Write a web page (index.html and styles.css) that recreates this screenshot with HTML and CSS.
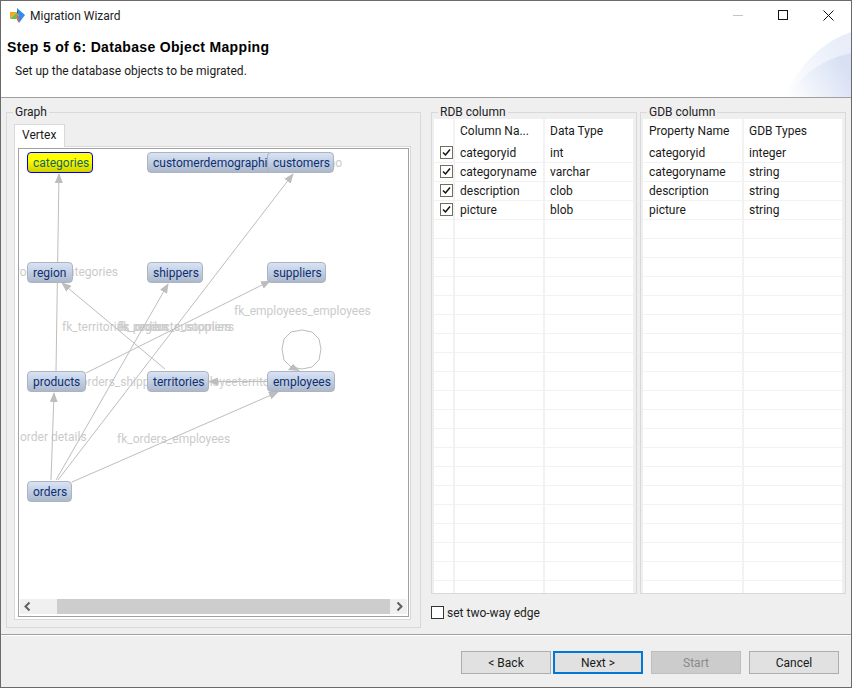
FILE: index.html
```html
<!DOCTYPE html>
<html lang="en">
<head>
  <meta charset="UTF-8" />
  <title>Migration Wizard</title>
  <link rel="stylesheet" href="styles.css">
</head>
<body>
<div class="window">

  <div class="titlebar">
    <svg class="logo" width="16" height="16" viewBox="0 0 16 16">
      <polygon points="8,0 16,7 10,15 10,8" fill="#2f8fe8"/>
      <polygon points="8,0 10,8 8,5" fill="#24408c"/>
      <polygon points="1,4 8,4 1,11" fill="#f5a623"/>
      <polygon points="1,11 8,4 9,11 4,11" fill="#6cc04a"/>
      <polygon points="8,6 10,8 10,15 8,12" fill="#ea5a6a"/>
    </svg>
    <span class="title">Migration Wizard</span>
    <div class="controls">
      <span class="ctl"><svg width="11" height="11" viewBox="0 0 11 11"><path d="M0 5.5H10" stroke="#c4c4c4"/></svg></span>
      <span class="ctl"><svg width="11" height="11" viewBox="0 0 11 11"><rect x="0.5" y="0.5" width="9" height="9" fill="none" stroke="#111"/></svg></span>
      <span class="ctl"><svg width="11" height="11" viewBox="0 0 11 11"><path d="M0.5 0.5L10.5 10.5M10.5 0.5L0.5 10.5" stroke="#111"/></svg></span>
    </div>
  </div>

  <div class="banner">
    <h1>Step 5 of 6: Database Object Mapping</h1>
    <p>Set up the database objects to be migrated.</p>
    <svg class="swoosh" width="70" height="67" viewBox="0 0 70 67">
      <defs>
        <linearGradient id="sw1" x1="0" y1="1" x2="1" y2="0.4">
          <stop offset="0" stop-color="#fff"/>
          <stop offset="1" stop-color="#e8edf9"/>
        </linearGradient>
        <linearGradient id="sw2" x1="0" y1="1" x2="1" y2="0.6">
          <stop offset="0" stop-color="#fff"/>
          <stop offset="1" stop-color="#d8e1f4"/>
        </linearGradient>
      </defs>
      <path d="M3 67Q28 16 70 2V67Z" fill="url(#sw1)"/>
      <path d="M6 67Q28 32 70 23V67Z" fill="url(#sw2)"/>
    </svg>
  </div>

  <div class="main">
    <fieldset class="group graph-group">
      <legend>Graph</legend>
      <div class="tab">Vertex</div>
      <div class="tab-pane">
        <div class="canvas">
          <div class="graph">
            <span class="edge-label l-cust">customercustomerdemo</span>
            <span class="edge-label l-cat">fk_products_categories</span>
            <span class="edge-label l-emp">fk_employees_employees</span>
            <span class="edge-label l-terr">fk_territories_region</span>
            <span class="edge-label l-sup">fk_products_suppliers</span>
            <span class="edge-label l-ocust">fk_orders_customers</span>
            <span class="edge-label l-ship">fk_orders_shippers</span>
            <span class="edge-label l-et">employeeterritories</span>
            <span class="edge-label l-od">order details</span>
            <span class="edge-label l-oe">fk_orders_employees</span>

            <svg class="edges" width="389" height="450" viewBox="19 149 389 450">
              <defs>
                <marker id="arrow" markerWidth="10" markerHeight="8" refX="9" refY="4" orient="auto" markerUnits="userSpaceOnUse">
                  <polygon points="0,0 10,4 0,8" fill="#bdbdbd"/>
                </marker>
              </defs>
              <g class="edge-lines">
                <line x1="56" y1="371" x2="59" y2="174" marker-end="url(#arrow)"/>
                <line x1="51" y1="480" x2="54" y2="393" marker-end="url(#arrow)"/>
                <line x1="56" y1="480" x2="168" y2="284" marker-end="url(#arrow)"/>
                <line x1="58" y1="480" x2="293" y2="174" marker-end="url(#arrow)"/>
                <line x1="72" y1="482" x2="278" y2="392" marker-end="url(#arrow)"/>
                <line x1="86" y1="373" x2="270" y2="281" marker-end="url(#arrow)"/>
                <line x1="165" y1="369" x2="62" y2="283" marker-end="url(#arrow)"/>
                <line x1="267" y1="381.5" x2="209" y2="381.5" marker-end="url(#arrow)"/>
                <polyline points="302,369 312,367 319,360 321,349 319,339 312,332 302,330 291,332 284,339 282,349 284,360 291,367 302,369"/>
                <polygon class="loop-head" points="288,370 293,364 300,371"/>
              </g>
            </svg>

            <div class="node selected n-categories">categories</div>
            <div class="node n-demo">customerdemographics</div>
            <div class="node n-customers">customers</div>
            <div class="node n-region">region</div>
            <div class="node n-shippers">shippers</div>
            <div class="node n-suppliers">suppliers</div>
            <div class="node n-products">products</div>
            <div class="node n-territories">territories</div>
            <div class="node n-employees">employees</div>
            <div class="node n-orders">orders</div>
          </div>
          <div class="hscroll">
            <svg class="arrow" width="16" height="15" viewBox="0 0 16 15"><path d="M9.5 3.5L5.5 7.5L9.5 11.5" fill="none" stroke="#606060" stroke-width="2"/></svg>
            <div class="track"><div class="thumb"></div></div>
            <svg class="arrow" width="16" height="15" viewBox="0 0 16 15"><path d="M6.5 3.5L10.5 7.5L6.5 11.5" fill="none" stroke="#606060" stroke-width="2"/></svg>
          </div>
        </div>
      </div>
    </fieldset>

    <div class="right">
      <div class="columns">
        <fieldset class="group col-group">
          <legend>RDB column</legend>
          <table class="grid rdb">
            <thead><tr><th></th><th>Column Na...</th><th>Data Type</th></tr></thead>
            <tbody>
              <tr><td class="chk"><span class="check"><svg width="11" height="11" viewBox="0 0 11 11"><path d="M2 5.5L4.5 8L9 2.5" fill="none" stroke="#111" stroke-width="1.5"/></svg></span></td><td>categoryid</td><td>int</td></tr>
              <tr><td class="chk"><span class="check"><svg width="11" height="11" viewBox="0 0 11 11"><path d="M2 5.5L4.5 8L9 2.5" fill="none" stroke="#111" stroke-width="1.5"/></svg></span></td><td>categoryname</td><td>varchar</td></tr>
              <tr><td class="chk"><span class="check"><svg width="11" height="11" viewBox="0 0 11 11"><path d="M2 5.5L4.5 8L9 2.5" fill="none" stroke="#111" stroke-width="1.5"/></svg></span></td><td>description</td><td>clob</td></tr>
              <tr><td class="chk"><span class="check"><svg width="11" height="11" viewBox="0 0 11 11"><path d="M2 5.5L4.5 8L9 2.5" fill="none" stroke="#111" stroke-width="1.5"/></svg></span></td><td>picture</td><td>blob</td></tr>
              <tr><td></td><td></td><td></td></tr><tr><td></td><td></td><td></td></tr><tr><td></td><td></td><td></td></tr><tr><td></td><td></td><td></td></tr>
              <tr><td></td><td></td><td></td></tr><tr><td></td><td></td><td></td></tr><tr><td></td><td></td><td></td></tr><tr><td></td><td></td><td></td></tr>
              <tr><td></td><td></td><td></td></tr><tr><td></td><td></td><td></td></tr><tr><td></td><td></td><td></td></tr><tr><td></td><td></td><td></td></tr>
              <tr><td></td><td></td><td></td></tr><tr><td></td><td></td><td></td></tr><tr><td></td><td></td><td></td></tr><tr><td></td><td></td><td></td></tr>
              <tr><td></td><td></td><td></td></tr><tr><td></td><td></td><td></td></tr><tr><td></td><td></td><td></td></tr><tr><td></td><td></td><td></td></tr>
            </tbody>
          </table>
        </fieldset>

        <fieldset class="group col-group">
          <legend>GDB column</legend>
          <table class="grid gdb">
            <thead><tr><th>Property Name</th><th>GDB Types</th></tr></thead>
            <tbody>
              <tr><td>categoryid</td><td>integer</td></tr>
              <tr><td>categoryname</td><td>string</td></tr>
              <tr><td>description</td><td>string</td></tr>
              <tr><td>picture</td><td>string</td></tr>
              <tr><td></td><td></td></tr><tr><td></td><td></td></tr><tr><td></td><td></td></tr><tr><td></td><td></td></tr>
              <tr><td></td><td></td></tr><tr><td></td><td></td></tr><tr><td></td><td></td></tr><tr><td></td><td></td></tr>
              <tr><td></td><td></td></tr><tr><td></td><td></td></tr><tr><td></td><td></td></tr><tr><td></td><td></td></tr>
              <tr><td></td><td></td></tr><tr><td></td><td></td></tr><tr><td></td><td></td></tr><tr><td></td><td></td></tr>
              <tr><td></td><td></td></tr><tr><td></td><td></td></tr><tr><td></td><td></td></tr><tr><td></td><td></td></tr>
            </tbody>
          </table>
        </fieldset>
      </div>

      <label class="two-way"><span class="box"></span>set two-way edge</label>
    </div>
  </div>

  <div class="footer">
    <button class="btn">&lt; Back</button>
    <button class="btn default">Next &gt;</button>
    <button class="btn disabled">Start</button>
    <button class="btn">Cancel</button>
  </div>

</div>
</body>
</html>
```

FILE: styles.css
```css
* {
  box-sizing: border-box;
}

body {
  margin: 0;
  font-family: Roboto, 'Noto Sans', sans-serif;
  font-size: 12px;
  color: #1a1a1a;
  background: #efefef;
}

.window {
  width: 852px;
  height: 688px;
  border: 1px solid #6a6a6a;
  background: #efefef;
  display: flex;
  flex-direction: column;
  overflow: hidden;
}

/* title bar */
.titlebar {
  height: 29px;
  flex: none;
  background: #fff;
  display: flex;
  align-items: center;
  padding-left: 8px;
}

.logo {
  margin-right: 5px;
}

.title {
  color: #222;
}

.controls {
  margin-left: auto;
  display: flex;
}

.ctl {
  width: 45px;
  height: 29px;
  display: flex;
  align-items: center;
  justify-content: center;
}

/* header */
.banner {
  height: 68px;
  flex: none;
  background: #fff;
  border-bottom: 1px solid #a0a0a0;
  position: relative;
}

.banner h1 {
  margin: 0;
  padding: 9px 0 0 6px;
  font-family: 'Liberation Sans', sans-serif;
  font-size: 14px;
  line-height: 17px;
  font-weight: bold;
  letter-spacing: 0.33px;
  color: #000;
}

.banner p {
  margin: 7px 0 0 14px;
  line-height: 16px;
}

.swoosh {
  position: absolute;
  right: 0;
  bottom: 0;
}

/* main area */
.main {
  flex: 1;
  display: flex;
  padding: 7px 0 0 5px;
  border-bottom: 1px solid #a0a0a0;
}

.group {
  margin: 0;
  border: 1px solid #d9d9d9;
  min-width: 0;
}

.group legend {
  padding: 0 2px;
  line-height: 14px;
  color: #222;
}

.graph-group legend {
  margin-left: -1px;
}

.col-group legend {
  margin-left: 4px;
}

.graph-group {
  width: 415px;
  height: 523px;
  padding: 5px 9px 7px 7px;
}

.tab {
  width: 51px;
  height: 23px;
  padding: 2px 0 0 7px;
  line-height: 16px;
  background: #fff;
  border: 1px solid #d9d9d9;
  border-bottom: none;
  position: relative;
  z-index: 1;
}

.tab-pane {
  height: 474px;
  margin-top: -1px;
  padding: 1px 1px 2px 3px;
  background: #fff;
  border: 1px solid #d9d9d9;
}

.canvas {
  height: 100%;
  border: 1px solid #a0a0a6;
}

.graph {
  height: 450px;
  position: relative;
  overflow: hidden;
}

.edges {
  position: absolute;
  left: 0;
  top: 0;
}

.edge-lines line,
.edge-lines polyline {
  stroke: #bdbdbd;
  stroke-width: 1;
  fill: none;
}

.loop-head {
  fill: #bdbdbd;
}

.edge-label {
  position: absolute;
  color: #cbcbcb;
  white-space: nowrap;
  line-height: 16px;
}

.l-cust { right: 66px; top: 6px; }
.l-cat { right: 290px; top: 115px; }
.l-emp { left: 215px; top: 154px; }
.l-terr { left: 43px; top: 170px; }
.l-sup { left: 98px; top: 170px; }
.l-ocust { left: 100px; top: 170px; }
.l-ship { left: 46px; top: 225px; }
.l-et { left: 167px; top: 225px; }
.l-od { left: 1px; top: 280px; }
.l-oe { left: 98px; top: 282px; }

.node {
  position: absolute;
  height: 21px;
  padding-left: 5px;
  line-height: 21px;
  white-space: nowrap;
  overflow: hidden;
  color: #0d2f73;
  background: linear-gradient(#d8e4f6, #acb8cb);
  border: 1px solid #adb3bf;
  border-radius: 4px;
}

.node.selected {
  color: #12665c;
  background: linear-gradient(#ffff00 40%, #cfcf00);
  border-color: #0000f0;
}

.n-categories { left: 8px; top: 3px; width: 66px; }
.n-demo { left: 128px; top: 3px; width: 126px; }
.n-customers { left: 248px; top: 3px; width: 67px; }
.n-region { left: 8px; top: 113px; width: 46px; }
.n-shippers { left: 128px; top: 113px; width: 56px; }
.n-suppliers { left: 248px; top: 113px; width: 59px; }
.n-products { left: 8px; top: 222px; width: 59px; }
.n-territories { left: 128px; top: 222px; width: 62px; }
.n-employees { left: 248px; top: 222px; width: 68px; }
.n-orders { left: 8px; top: 332px; width: 45px; }

.hscroll {
  height: 15px;
  margin: 0 1px;
  display: flex;
  background: #f0f0f0;
}

.track {
  flex: 1;
  padding-left: 21px;
}

.thumb {
  width: 333px;
  height: 15px;
  background: #cdcdcd;
}

/* column tables */
.right {
  margin-left: 10px;
  width: 415px;
}

.columns {
  display: flex;
  gap: 3px;
}

.col-group {
  width: 206px;
  height: 489px;
  padding: 0 3px 0 2px;
  overflow: hidden;
}

.grid {
  width: 199px;
  table-layout: fixed;
  border-collapse: collapse;
  background: #fff;
}

.grid th {
  height: 24px;
  padding: 0 0 1px 5px;
  font-weight: normal;
  text-align: left;
  border-right: 2px solid #f3f3f3;
}

.grid td {
  height: 19px;
  padding: 1px 0 0 5px;
  line-height: 16px;
  border-right: 2px solid #f2f2f2;
  border-bottom: 1px solid #f2f2f2;
}

.grid th:last-child,
.grid td:last-child {
  border-right: none;
}

.rdb th:first-child { width: 20px; }
.rdb th:nth-child(2) { width: 90px; }
.gdb th:first-child { width: 100px; }

.gdb th:first-child,
.gdb td:first-child {
  padding-left: 6px;
}

.grid td.chk {
  padding: 0 0 0 6px;
}

.check {
  display: block;
  width: 13px;
  height: 13px;
  background: #fff;
  border: 1px solid #6f6f5c;
}

.check svg {
  display: block;
}

.two-way {
  display: flex;
  align-items: center;
  height: 13px;
  margin-top: 12px;
  color: #222;
}

.box {
  width: 13px;
  height: 13px;
  margin-right: 3px;
  background: #fff;
  border: 1px solid #333;
}

/* buttons */
.footer {
  height: 52px;
  flex: none;
  border-top: 1px solid #fff;
  display: flex;
  justify-content: flex-end;
  padding: 15px 12px 0 0;
  gap: 8px;
}

.btn {
  width: 90px;
  height: 23px;
  padding: 0;
  font-family: inherit;
  font-size: 12px;
  color: #1a1a1a;
  background: #e1e1e1;
  border: 1px solid #adadad;
  border-radius: 0;
}

.btn:first-child {
  margin-right: -6px;
}

.btn.default {
  border: 2px solid #0078d7;
}

.btn.disabled {
  color: #8a8a8a;
  background: #cccccc;
  border-color: #bfbfbf;
}
```
